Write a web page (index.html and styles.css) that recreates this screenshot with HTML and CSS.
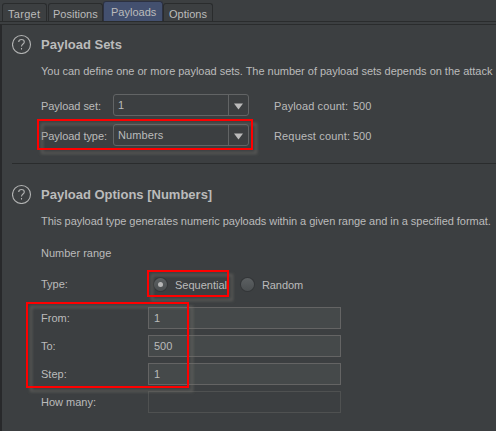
FILE: index.html
```html
<!DOCTYPE html>
<html lang="en">
<head>
<meta charset="utf-8">
<title>Payloads</title>
<link rel="stylesheet" href="styles.css">
</head>
<body>
<nav class="tabs">
  <span class="tab target">Target</span>
  <span class="tab positions">Positions</span>
  <span class="tab active">Payloads</span>
  <span class="tab options">Options</span>
</nav>
<main class="panel">
  <section class="sets">
    <header>
      <svg class="help" width="20" height="20" viewBox="0 0 20 20"><circle cx="9.5" cy="10.5" r="9"/><path d="M6.7 8C6.7 4.6 12.3 4.6 12.3 8C12.3 10 9.5 10 9.5 12.5"/><path d="M9.5 14V15.6"/></svg>
      <h2>Payload Sets</h2>
    </header>
    <p class="intro">You can define one or more payload sets. The number of payload sets depends on the attack</p>
    <div class="set-row">
      <label>Payload set:</label>
      <div class="combo"><span>1</span><i><svg width="9" height="7" viewBox="0 0 9 7"><path d="M0 .5H9L4.5 6.5Z"/></svg></i></div>
      <span class="count">Payload count:</span><span class="total">500</span>
    </div>
    <div class="set-row">
      <label>Payload type:</label>
      <div class="combo"><span class="numbers">Numbers</span><i><svg width="9" height="7" viewBox="0 0 9 7"><path d="M0 .5H9L4.5 6.5Z"/></svg></i></div>
      <span class="count request">Request count:</span><span class="total">500</span>
    </div>
  </section>
  <section class="opts">
    <header>
      <svg class="help" width="20" height="20" viewBox="0 0 20 20"><circle cx="9.5" cy="10.5" r="9"/><path d="M6.7 8C6.7 4.6 12.3 4.6 12.3 8C12.3 10 9.5 10 9.5 12.5"/><path d="M9.5 14V15.6"/></svg>
      <h2>Payload Options [Numbers]</h2>
    </header>
    <p class="about">This payload type generates numeric payloads within a given range and in a specified format.</p>
    <p class="range">Number range</p>
    <div class="radio-row">
      <label>Type:</label>
      <b class="radio on"></b><span class="seq">Sequential</span>
      <b class="radio"></b><span class="random">Random</span>
    </div>
    <div class="field-row"><label>From:</label><div class="field">1</div></div>
    <div class="field-row"><label>To:</label><div class="field">500</div></div>
    <div class="field-row"><label>Step:</label><div class="field">1</div></div>
    <div class="field-row"><label>How many:</label><div class="field disabled"></div></div>
  </section>
</main>
<div class="mark mark-type"></div>
<div class="mark mark-seq"></div>
<div class="mark mark-range"></div>
</body>
</html>
```
FILE: styles.css
```css
* { box-sizing: border-box; }
body {
  margin: 0;
  width: 496px;
  height: 431px;
  overflow: hidden;
  position: relative;
  background: #3c3f41;
  color: #bbbbbb;
  font: 11px/14px "Liberation Sans", Arial, sans-serif;
  white-space: nowrap;
}
p, h2 { margin: 0; }
.tabs {
  height: 22px;
  display: flex;
  align-items: flex-end;
  padding-left: 2px;
  border-bottom: 1px solid #2a2c2d;
}
.tab {
  height: 18px;
  padding: 3px 0 0 5px;
  border: 1px solid #2a2c2d;
  border-bottom: 0;
  border-radius: 3px 3px 0 0;
}
.target { width: 45px; letter-spacing: .3px; }
.positions { width: 55px; margin-left: 1px; padding-left: 4px; }
.active { width: 60px; height: 20px; padding: 3px 0 0 7px; background: #43506f; border-color: #2c3142; }
.options { width: 50px; }
.panel {
  margin-top: 2px;
  height: 407px;
  border-top: 1px solid #2a2c2d;
  border-left: 2px solid #28292b;
}
.sets {
  height: 139px;
  margin-left: 10px;
  padding-top: 9px;
  border-bottom: 1px solid #2a2c2d;
}
.opts { margin-left: 10px; padding-top: 20px; }
header { height: 20px; display: flex; align-items: center; }
h2 { margin-left: 9px; padding-top: 2px; font-size: 13px; line-height: 16px; }
.help { fill: none; stroke: #b2b3b3; stroke-width: 1.1; }
.intro, .about { margin-left: 29px; }
.intro { margin-top: 10px; margin-bottom: 16px; letter-spacing: -.02px; }
.about { margin-top: 10px; letter-spacing: -.05px; }
.range { margin: 18px 0 0 29px; }
.set-row {
  height: 22px;
  margin: 0 0 8px 29px;
  display: flex;
  align-items: center;
}
.set-row label { width: 72px; padding-top: 2px; letter-spacing: -.05px; }
.combo {
  width: 136px;
  height: 22px;
  display: flex;
  border: 1px solid #626465;
  border-radius: 3px;
  padding: 3px 0 0 4px;
}
.combo span { flex: 1; }
.combo i {
  width: 20px;
  height: 20px;
  margin-top: -3px;
  border-left: 1px solid #626465;
  display: flex;
  align-items: center;
  justify-content: center;
}
.combo svg { fill: #bbbbbb; margin-top: 2px; }
.numbers { letter-spacing: .1px; }
.count { width: 79px; margin-left: 25px; padding-top: 2px; letter-spacing: .1px; }
.request { letter-spacing: .15px; }
.total { padding-top: 2px; }
.radio-row {
  height: 14px;
  margin: 17px 0 16px 29px;
  display: flex;
  align-items: center;
}
.radio-row label { width: 113px; }
.radio {
  width: 13px;
  height: 13px;
  border-radius: 50%;
  background: linear-gradient(#5c6062, #4b4f51);
  box-shadow: 0 0 0 1px #333638;
  display: flex;
  align-items: center;
  justify-content: center;
}
.on::after { content: ""; width: 5px; height: 5px; border-radius: 50%; background: #b7b7b7; }
.radio-row span { padding: 2px 0 0 8px; }
.seq { width: 74px; }
.random { letter-spacing: -.1px; }
.field-row {
  height: 22px;
  margin: 0 0 6px 29px;
  display: flex;
  align-items: center;
}
.field-row label { width: 107px; }
.field {
  width: 193px;
  height: 22px;
  padding: 3px 5px;
  background: #45494a;
  border: 1px solid #646464;
}
.disabled { background: #3c3f41; border-color: #4f5151; }
.mark {
  position: absolute;
  border: 2px solid #ff0000;
  filter: drop-shadow(4px 4px 1.5px rgba(120, 118, 112, .55));
}
.mark-type { left: 37px; top: 119px; width: 216px; height: 31px; }
.mark-seq { left: 147px; top: 270px; width: 82px; height: 27px; }
.mark-range { left: 26px; top: 302px; width: 163px; height: 86px; }
```
